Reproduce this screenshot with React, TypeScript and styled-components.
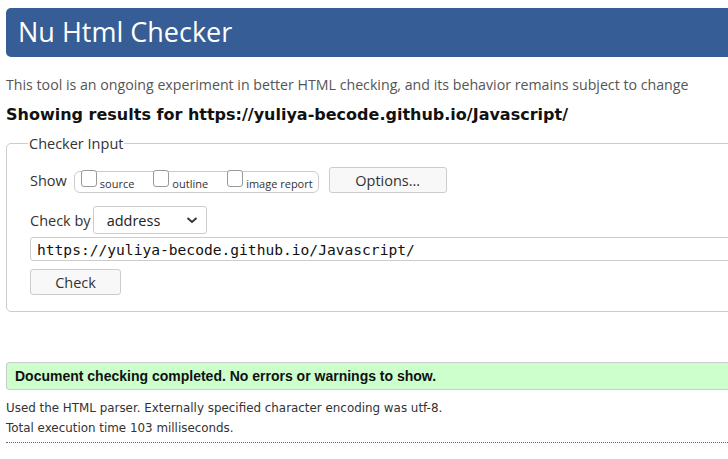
import styled, { createGlobalStyle } from 'styled-components';

const url = 'https://yuliya-becode.github.io/Javascript/';

const App = () => {
  return (
    <Page>
      <GlobalStyle />
      <Header>
        <Title>Nu Html Checker</Title>
      </Header>
      <Intro>
        This tool is an ongoing experiment in better HTML checking, and its behavior remains subject to change
      </Intro>
      <Results>Showing results for {url}</Results>

      <Fieldset>
        <Legend>Checker Input</Legend>
        <Row $top={10}>
          <Label>Show</Label>
          <ShowGroup>
            <Option>
              <Box />
              source
            </Option>
            <Option>
              <Box />
              outline
            </Option>
            <Option>
              <Box />
              image report
            </Option>
          </ShowGroup>
          <Button $width={118}>Options…</Button>
        </Row>
        <Row $top={13}>
          <Label>Check by</Label>
          <Select>
            address
            <svg width="12" height="8" viewBox="0 0 12 8">
              <path d="M1.5 2l4.5 4 4.5-4" fill="none" stroke="#333" strokeWidth="1.8" />
            </svg>
          </Select>
        </Row>
        <UrlInput>{url}</UrlInput>
        <Button $width={91} $top={8}>
          Check
        </Button>
      </Fieldset>

      <Success>Document checking completed. No errors or warnings to show.</Success>
      <Summary>
        <Details>Used the HTML parser. Externally specified character encoding was utf-8.</Details>
        <Details>Total execution time 103 milliseconds.</Details>
      </Summary>
      <Rule />
    </Page>
  );
};

export default App;

const GlobalStyle = createGlobalStyle`
  html, body {
    margin: 0;
    background: #fff;
    overflow: hidden;
  }
`;

const Page = styled.div`
  width: 820px;
  padding: 8px 6px 0;
  font-family: 'Open Sans', sans-serif;
  color: #222;
`;
const Header = styled.div`
  height: 49px;
  display: flex;
  align-items: center;
  padding-left: 12px;
  background-color: #365d95;
  border-radius: 5px;
`;
const Title = styled.h1`
  margin: 0 0 2px;
  font-weight: 400;
  font-size: 27px;
  color: #fff;
`;
const Intro = styled.p`
  margin: 18px 0 0;
  font-size: 14.2px;
  color: #555;
`;
const Results = styled.h2`
  margin: 11px 0 0;
  font-family: 'DejaVu Sans', sans-serif;
  font-weight: 700;
  font-size: 16px;
  color: #111;
`;
const Fieldset = styled.fieldset`
  margin: 10px 0 0;
  padding: 4px 23px 16px;
  border: 1px solid #ccc;
  border-radius: 5px;
`;
const Legend = styled.legend`
  padding: 0 1px;
  margin-left: -2px;
  font-size: 14.5px;
  color: #333;
`;
const Row = styled.div<{ $top: number }>`
  display: flex;
  align-items: center;
  margin-top: ${(p) => p.$top}px;
`;
const Label = styled.span`
  font-size: 14.5px;
  color: #333;
  margin-right: 2px;
`;
const ShowGroup = styled.div`
  display: flex;
  height: 20px;
  margin: 3px 10px 0 5px;
  padding: 0 5px 0 6px;
  border: 1px solid #ccc;
  border-radius: 6px;
`;
const Option = styled.label`
  display: flex;
  align-items: flex-end;
  padding-bottom: 1px;
  font-size: 11px;
  color: #333;
  margin-right: 19px;
  &:last-child {
    margin-right: 0;
  }
`;
const Box = styled.span`
  width: 14px;
  height: 15px;
  margin-top: -2px;
  margin-right: 3px;
  align-self: flex-start;
  border: 1px solid #999;
  border-radius: 3px;
  background: #fff;
`;
const Button = styled.button<{ $width: number; $top?: number }>`
  width: ${(p) => p.$width}px;
  height: 26px;
  margin-top: ${(p) => p.$top ?? 0}px;
  font-family: 'Open Sans', sans-serif;
  font-size: 14.5px;
  color: #333;
  background: #f8f8f8;
  border: 1px solid #ccc;
  border-radius: 3px;
`;
const Select = styled.div`
  width: 114px;
  height: 28px;
  box-sizing: border-box;
  display: flex;
  align-items: center;
  justify-content: space-between;
  padding: 0 8px 0 13px;
  font-family: 'Open Sans', sans-serif;
  font-size: 14.5px;
  color: #222;
  border: 1px solid #ccc;
  border-radius: 3px;
  background: #fff;
`;
const UrlInput = styled.div`
  margin-top: 3px;
  height: 24px;
  box-sizing: border-box;
  display: flex;
  align-items: center;
  padding-left: 6px;
  font-family: 'DejaVu Sans Mono', monospace;
  font-size: 14.6px;
  color: #111;
  border: 1px solid #ccc;
  border-radius: 3px;
`;
const Success = styled.div`
  margin-top: 50px;
  height: 28px;
  box-sizing: border-box;
  display: flex;
  align-items: center;
  padding-left: 8px;
  font-family: 'Liberation Sans', sans-serif;
  font-weight: 700;
  font-size: 14px;
  color: #111;
  background: #ccffcc;
  border: 1px solid #ccc;
  border-radius: 3px;
`;
const Summary = styled.div`
  margin-top: 8px;
`;
const Details = styled.p`
  margin: 0;
  font-family: 'DejaVu Sans', sans-serif;
  font-size: 11.9px;
  line-height: 20px;
  color: #333;
`;
const Rule = styled.hr`
  margin: 4px 0 0;
  border: 0;
  border-top: 1px dotted #666;
`;
